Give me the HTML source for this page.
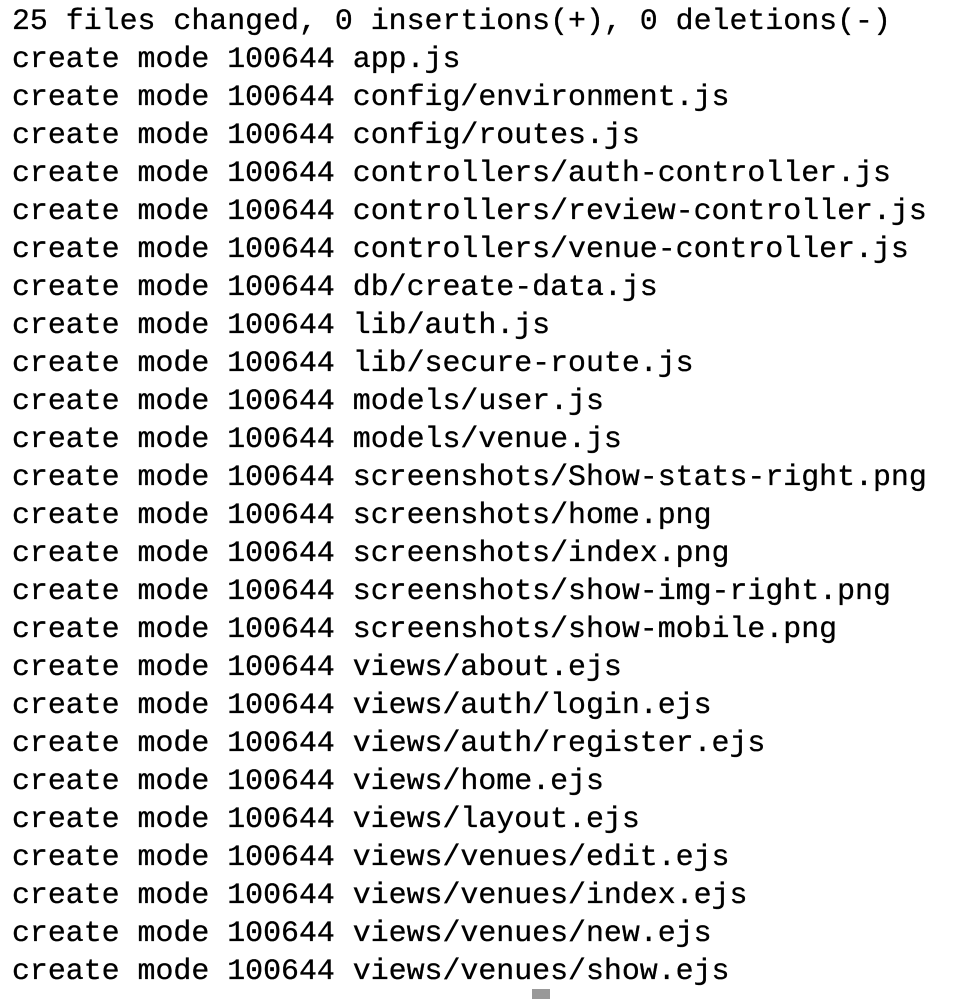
<!DOCTYPE html>
<html><head><style>
html,body{margin:0;padding:0;background:#fff;width:956px;height:996px;overflow:hidden}
pre{margin:0;position:absolute;left:12px;top:2px;font-family:"Liberation Mono",monospace;font-size:29.9px;line-height:38px;color:#000;-webkit-text-stroke:0.3px #000}
.cur{position:absolute;left:532px;top:989px;width:18px;height:10px;background:#999}
</style></head><body>
<pre>25 files changed, 0 insertions(+), 0 deletions(-)
create mode 100644 app.js
create mode 100644 config/environment.js
create mode 100644 config/routes.js
create mode 100644 controllers/auth-controller.js
create mode 100644 controllers/review-controller.js
create mode 100644 controllers/venue-controller.js
create mode 100644 db/create-data.js
create mode 100644 lib/auth.js
create mode 100644 lib/secure-route.js
create mode 100644 models/user.js
create mode 100644 models/venue.js
create mode 100644 screenshots/Show-stats-right.png
create mode 100644 screenshots/home.png
create mode 100644 screenshots/index.png
create mode 100644 screenshots/show-img-right.png
create mode 100644 screenshots/show-mobile.png
create mode 100644 views/about.ejs
create mode 100644 views/auth/login.ejs
create mode 100644 views/auth/register.ejs
create mode 100644 views/home.ejs
create mode 100644 views/layout.ejs
create mode 100644 views/venues/edit.ejs
create mode 100644 views/venues/index.ejs
create mode 100644 views/venues/new.ejs
create mode 100644 views/venues/show.ejs</pre>
<div class="cur"></div>
</body></html>
